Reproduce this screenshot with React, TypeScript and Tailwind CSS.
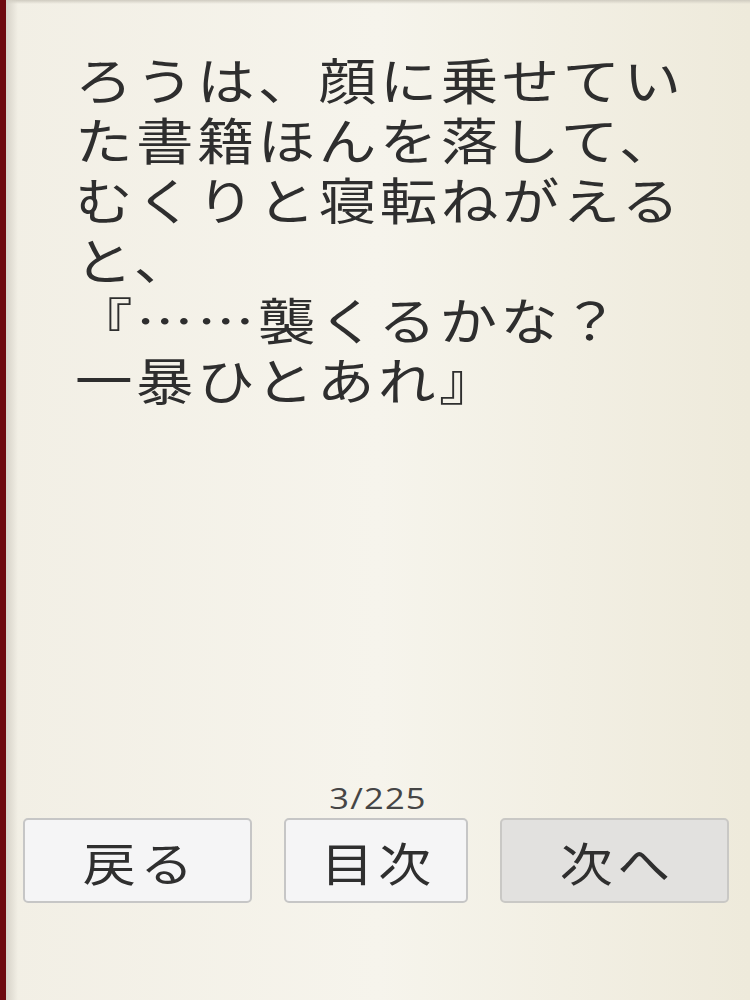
const lines = [
  'ろうは、顔に乗せてい',
  'た書籍ほんを落して、',
  'むくりと寝転ねがえる',
  'と、',
  '『……襲くるかな？',
  '一暴ひとあれ』',
]

const jp = { fontFamily: '"Noto Sans CJK JP", "Noto Sans", sans-serif' }

function NavButton({ label, width, pressed }: { label: string; width: string; pressed?: boolean }) {
  return (
    <button
      className={`${width} h-[85px] rounded-[5px] border-2 flex items-center justify-center text-[46px] tracking-[4px] text-[#2f2f2f] ${
        pressed ? 'bg-[#e2e1df] border-[#c9c8c5]' : 'bg-[#f5f5f6] border-[#c6c6c6]'
      }`}
      style={jp}
    >
      <span className="pl-[4px] leading-none scale-x-[1.15]">{label}</span>
    </button>
  )
}

export default function App() {
  return (
    <div className="w-[750px] h-[1000px] flex overflow-hidden bg-[#f4f1e6]">
      {/* spine */}
      <div className="w-[6px] h-full bg-[#6e0a10]" />
      <div className="relative flex-1 flex flex-col bg-gradient-to-r from-[#f2efe5] via-[#f6f4ec] to-[#eeeadb]">
        <div className="absolute inset-x-0 top-0 h-[4px] bg-gradient-to-b from-[#cfcbc0] to-transparent" />
        <div className="absolute inset-y-0 left-0 w-[12px] bg-gradient-to-r from-[#d6d2c8] to-transparent" />

        <div className="pt-[48px] pl-[69px]">
          <div
            className="text-[50px] leading-[60px] tracking-[3px] text-[#2e2e2e] whitespace-nowrap origin-left scale-x-[1.15]"
            style={jp}
          >
            {lines.map((l) => (
              <div key={l}>{l}</div>
            ))}
          </div>
        </div>

        <div className="flex-1" />

        <div
          className="text-center text-[30px] leading-[30px] tracking-[1px] text-[#454545] mb-[5px] scale-x-[1.15]"
          style={{ fontFamily: '"Open Sans", "DejaVu Sans", sans-serif' }}
        >
          3/225
        </div>

        <div className="flex gap-[32px] pl-[17px] mb-[97px]">
          <NavButton label="戻る" width="w-[229px]" />
          <NavButton label="目次" width="w-[184px]" />
          <NavButton label="次へ" width="w-[229px]" pressed />
        </div>
      </div>
    </div>
  )
}
